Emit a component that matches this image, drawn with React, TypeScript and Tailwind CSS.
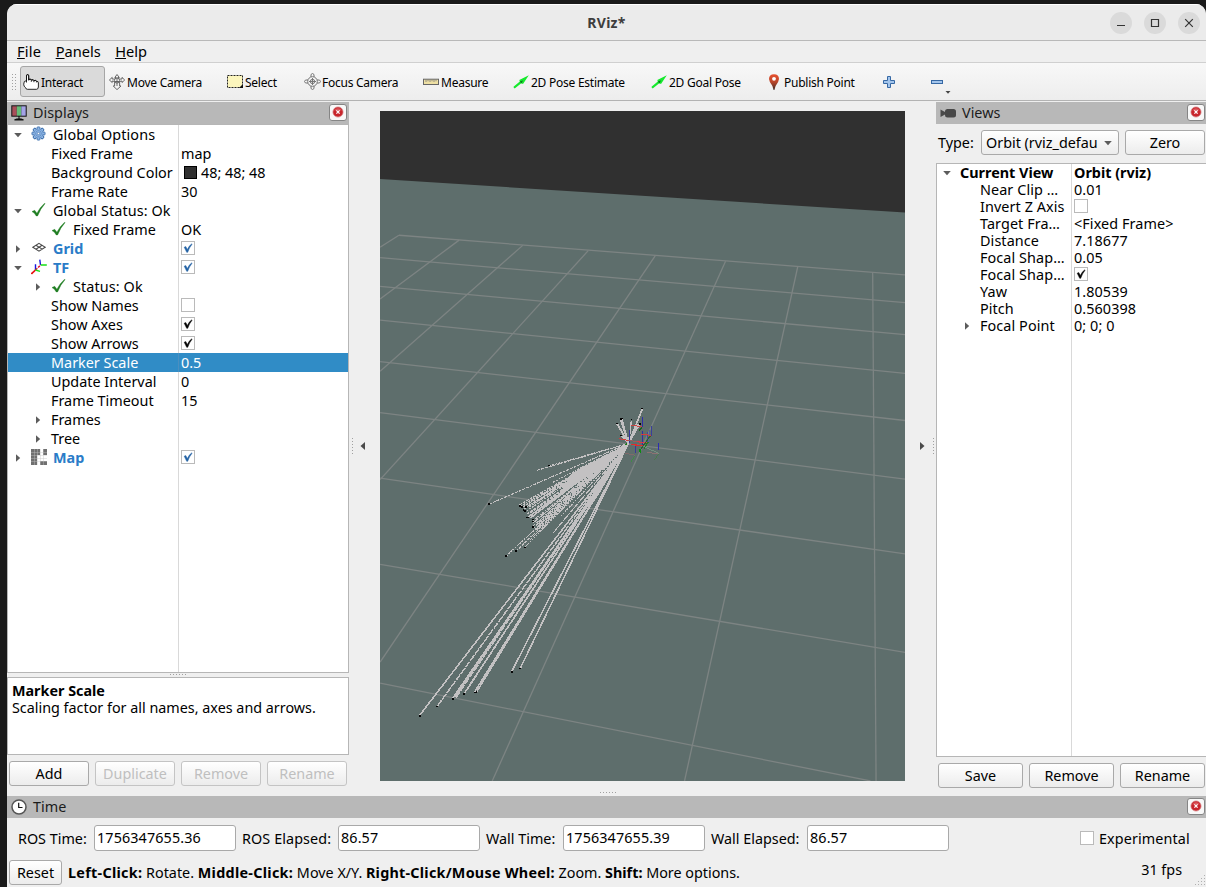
import React from "react";

const UI = "font-['Noto_Sans',sans-serif]";

function CloseBox() {
  return (
    <div className="flex h-[17px] w-[18px] shrink-0 items-center justify-center rounded-[3px] border border-[#858585] bg-[#f8f8f8]">
      <svg width="12" height="12" viewBox="0 0 12 12">
        <circle cx="6" cy="6" r="5.1" fill="#c8252c" stroke="#d98a8c" strokeWidth="0.7" />
        <path d="M2.2 4.5a4.3 4.3 0 0 1 7.6 0Z" fill="#dd5a5e" />
        <path d="M4.4 4.4l3.2 3.2M7.6 4.4l-3.2 3.2" stroke="#fff" strokeWidth="1.3" />
      </svg>
    </div>
  );
}

function DockTitle({ icon, title, closePad }: { icon: React.ReactNode; title: string; closePad: string }) {
  return (
    <div className={`flex h-[22px] shrink-0 items-center bg-[#b8b8b8] pl-1 ${closePad}`}>
      <div className="flex w-[22px] items-center">{icon}</div>
      <div className="grow text-[14.4px] leading-[22px] text-[#1c1c1c]">{title}</div>
      <div className="-mt-[2px]"><CloseBox /></div>
    </div>
  );
}

function Button({ children, className = "", disabled = false }: { children: React.ReactNode; className?: string; disabled?: boolean }) {
  return (
    <div
      className={`flex h-[25px] items-center justify-center rounded-[3px] border bg-linear-to-b from-white to-[#ececec] text-[14.35px] leading-[22px] ${
        disabled ? "border-[#c4c4c4] text-[#bfbfbf]" : "border-[#a9a9a9] text-black"
      } ${className}`}
    >
      {children}
    </div>
  );
}

function Arrow({ open = false }: { open?: boolean }) {
  return (
    <svg width="8" height="8" viewBox="0 0 8 8" className="block">
      <path d={open ? "M0.2 2h7.6L4 6.2Z" : "M2 0.2v7.6L6.2 4Z"} fill="#5c5c5c" />
    </svg>
  );
}

function Check({ on = true, blue = false }: { on?: boolean; blue?: boolean }) {
  return (
    <div className="h-[14px] w-[14px] border border-[#bababa] bg-white">
      {on && (
        <svg width="12" height="12" viewBox="0 0 12 12" className="block">
          <path d="M2.2 5.2L3.8 4.6L5.3 7.6Q7 3.6 9.8 1.8L9.9 2.6Q7.4 5.4 5.7 10.3H4.7Z" fill={blue ? "#2463a5" : "#050505"} stroke={blue ? "#2463a5" : "#050505"} strokeWidth="0.5" />
        </svg>
      )}
    </div>
  );
}

const gearTeeth = [0, 45, 90, 135, 180, 225, 270, 315];

const icons: Record<string, React.ReactNode> = {
  gear: (
    <svg width="16" height="16" viewBox="0 0 16 16" className="-mt-[2px] block">
      {gearTeeth.map((a) => (
        <rect key={a} x="6.1" y="1" width="2.8" height="4" rx="0.6" fill="#a9c8ee" stroke="#3a6fae" strokeWidth="1" transform={`rotate(${a} 7.5 7.5)`} />
      ))}
      <circle cx="7.5" cy="7.5" r="4.5" fill="#93b9e6" stroke="#5b8bc6" strokeWidth="0.6" />
      <circle cx="7.5" cy="7.5" r="2.9" fill="none" stroke="#4677b4" strokeWidth="0.6" />
      <circle cx="7.5" cy="7.5" r="1.2" fill="#fff" stroke="#3a6fae" strokeWidth="0.7" />
    </svg>
  ),
  ok: (
    <svg width="16" height="16" viewBox="0 0 16 16" className="-mt-[2px] block">
      <path d="M1 9.6L3.7 8.3L5.9 11.2Q8.5 5.8 13.6 1.2L14 1.7Q9.4 6.6 6.6 13.9H5.2Q3.7 10.9 1 9.6Z" fill="#1f7d22" stroke="#1f7d22" strokeWidth="0.4" />
    </svg>
  ),
  grid: (
    <svg width="16" height="16" viewBox="0 0 16 16" fill="none" stroke="#4a4a4a" strokeWidth="1.1" className="-mt-px block">
      <path d="M8 3.4L14.2 7.2L8 11.2L1.8 7.2ZM4.9 5.2L11.2 9.1M11.1 5.2L4.9 9.2" />
    </svg>
  ),
  tf: (
    <svg width="16" height="16" viewBox="0 0 16 16" fill="none" strokeWidth="1.4" className="-mt-[2px] block">
      <path d="M4.5 11V5.2M9.5 6L8.8 0.7" stroke="#1616e0" />
      <path d="M4.5 11L9.8 6" stroke="#e8102a" strokeDasharray="2.5 1" />
      <path d="M4.5 11L0.4 14.8" stroke="#e81010" strokeWidth="1.7" />
      <path d="M4.5 11L9 12.3M9.7 6H15.8" stroke="#17e017" />
    </svg>
  ),
  map: (
    <svg width="16" height="16" viewBox="0 0 16 16" className="-mt-[2px] block">
      <path d="M0 0H9V6H6V16H0ZM12 0H16V6H12ZM9 12H16V16H9Z" fill="#707070" />
      <path d="M0 3.5H16M0 6.5H16M0 9.5H16M0 12.5H16M3.5 0V16M6.5 0V16M9.5 0V16M12.5 0V16" stroke="#c4c4c4" strokeWidth="0.4" />
    </svg>
  ),
};

type Item = {
  name: string;
  depth: 0 | 1;
  arrow?: "open" | "closed";
  icon?: string;
  value?: React.ReactNode;
  blue?: boolean;
  selected?: boolean;
};

const displayRows: Item[] = [
  { name: "Global Options", depth: 0, arrow: "open", icon: "gear" },
  { name: "Fixed Frame", depth: 1, value: "map" },
  {
    name: "Background Color",
    depth: 1,
    value: (
      <span className="flex items-center">
        <span className="mr-1 ml-[3px] h-[13px] w-[13px] border border-black bg-[#303030]" />
        48; 48; 48
      </span>
    ),
  },
  { name: "Frame Rate", depth: 1, value: "30" },
  { name: "Global Status: Ok", depth: 0, arrow: "open", icon: "ok" },
  { name: "Fixed Frame", depth: 1, icon: "ok", value: "OK" },
  { name: "Grid", depth: 0, arrow: "closed", icon: "grid", blue: true, value: <Check blue /> },
  { name: "TF", depth: 0, arrow: "open", icon: "tf", blue: true, value: <Check blue /> },
  { name: "Status: Ok", depth: 1, arrow: "closed", icon: "ok" },
  { name: "Show Names", depth: 1, value: <Check on={false} /> },
  { name: "Show Axes", depth: 1, value: <Check /> },
  { name: "Show Arrows", depth: 1, value: <Check /> },
  { name: "Marker Scale", depth: 1, value: "0.5", selected: true },
  { name: "Update Interval", depth: 1, value: "0" },
  { name: "Frame Timeout", depth: 1, value: "15" },
  { name: "Frames", depth: 1, arrow: "closed" },
  { name: "Tree", depth: 1, arrow: "closed" },
  { name: "Map", depth: 0, arrow: "closed", icon: "map", blue: true, value: <Check blue /> },
];

function Value({ children }: { children?: React.ReactNode }) {
  const isText = typeof children === "string";
  return <div className={`flex items-center pl-[2px] ${isText ? "" : "pb-px"}`}>{children}</div>;
}

function DisplayRow({ row }: { row: Item }) {
  const line = row.selected ? "border-[#4a8fc0]" : "border-[#d9d9d9]";
  return (
    <div className={`flex h-[19px] shrink-0 text-[14.4px] leading-[19px] ${row.selected ? "bg-[#308cc6] text-white" : "text-black"}`}>
      <div className={`flex w-[171px] items-center overflow-hidden border-r whitespace-nowrap ${line} ${row.depth === 0 ? "pl-[6px]" : "pl-[26px]"}`}>
        <div className="w-[17px] shrink-0">{row.arrow && <Arrow open={row.arrow === "open"} />}</div>
        {row.icon && <div className="w-[22px] shrink-0">{icons[row.icon]}</div>}
        <span className={row.blue ? "font-bold text-[#2a7cc8]" : row.icon ? "tracking-[0.1px]" : ""}>{row.name}</span>
      </div>
      <Value>{row.value}</Value>
    </div>
  );
}

function HandleDots({ vertical = false }: { vertical?: boolean }) {
  const n = [0, 1, 2, 3, 4, 5];
  return (
    <div className={`flex gap-[2px] ${vertical ? "flex-col" : ""}`}>
      {n.map((i) => (
        <span key={i} className="h-px w-px bg-[#a0a0a0]" />
      ))}
    </div>
  );
}

function DisplaysPanel() {
  return (
    <div className="flex w-[342px] shrink-0 flex-col">
      <DockTitle
        title="Displays"
        closePad="pr-[2px]"
        icon={
          <svg width="16" height="16" viewBox="0 0 16 16">
            <rect x="0.3" y="0.3" width="15.4" height="11.4" fill="#111" />
            <rect x="1.3" y="1.3" width="4.5" height="9.4" fill="#a84f5a" />
            <rect x="5.8" y="1.3" width="4.5" height="9.4" fill="#65bc78" />
            <rect x="10.3" y="1.3" width="4.4" height="9.4" fill="#a3a3e6" />
            <path d="M8 11V13.8M3.5 15Q8 12.6 12.5 15Z" fill="#111" stroke="#111" strokeWidth="1.1" />
          </svg>
        }
      />
      <div className="flex h-[549px] flex-col border border-[#b6b6b6] bg-white">
        {displayRows.map((row, i) => (
          <DisplayRow key={i} row={row} />
        ))}
        <div className="w-[171px] grow border-r border-[#d9d9d9]" />
      </div>
      <div className="flex h-1 items-start justify-center pt-px"><HandleDots /></div>
      <div className="h-[78px] border border-[#b6b6b6] bg-white px-1 pt-1 text-[14.35px] leading-[17px] whitespace-nowrap text-black">
        <div className="font-bold">Marker Scale</div>
        <div>Scaling factor for all names, axes and arrows.</div>
      </div>
      <div className="flex gap-[6px] pt-[6px] pl-[2px]">
        <Button className="w-20">Add</Button>
        <Button className="w-20" disabled>Duplicate</Button>
        <Button className="w-20" disabled>Remove</Button>
        <Button className="w-20" disabled>Rename</Button>
      </div>
    </div>
  );
}

/* Scene geometry, in the coordinate space of the render view's viewBox. */
const gridLines = [
  [130, 296, 1475, 386], [80, 347, 1475, 449], [80, 412, 1475, 522], [80, 489, 1475, 610],
  [80, 583, 1475, 717], [80, 699, 1475, 850], [80, 848, 1475, 1020], [80, 1044, 1475, 1244],
  [80, 1314, 1383, 1536], [130, 296, 80, 323], [290, 307, 80, 441], [459, 319, 80, 605],
  [633, 331, 80, 851], [811, 343, 80, 1266], [998, 355, 378, 1536], [1190, 367, 889, 1536],
  [1389, 380, 1398, 1536],
];

const solidRays = [
  [185, 1387], [272, 1349], [277, 1346], [331, 1334], [337, 1333], [430, 1287], [452, 1281],
  [303, 1338], [473, 937], [476, 935], [480, 938], [777, 691], [774, 697], [709, 724], [722, 713],
  [720, 750], [768, 725], [772, 722], [712, 726], [719, 715], [748, 717], [764, 725],
];

const dashedRays = [
  [232, 1366], [282, 1346], [310, 1330],
  [498, 830], [530, 820], [370, 907], [540, 857], [450, 909], [453, 912], [458, 914], [462, 918],
  [468, 914], [470, 922], [475, 914], [486, 945], [486, 950], [490, 947], [487, 956], [489, 961],
  [494, 955], [500, 956], [495, 966], [415, 1025], [441, 1014], [466, 1004], [478, 989],
  [540, 972], [545, 967], [560, 935], [480, 927], [484, 930], [470, 930], [500, 900], [510, 885],
];

const tips = [
  [185, 1388], [232, 1367], [273, 1350], [303, 1337], [303, 1340], [331, 1335], [336, 1334],
  [430, 1288], [452, 1281], [370, 907], [529, 819], [451, 911], [458, 913], [461, 920], [467, 914],
  [474, 937], [471, 937], [487, 942], [486, 946], [486, 959], [466, 923], [415, 1025],
  [442, 1014], [466, 1005], [777, 690], [709, 724], [722, 712], [720, 714], [720, 751],
  [748, 715], [771, 725],
];

const axes: [number, number, number, number, string, number][] = [
  [742, 738, 742, 768, "#34349c", 1], [778, 709, 778, 732, "#2f2fa6", 1.2], [778, 740, 778, 778, "#2f2fa6", 1.2],
  [801, 729, 801, 753, "#3a3f9a", 1.2], [796, 738, 794, 766, "#55609a", 1], [790, 742, 790, 768, "#44499c", 1],
  [820, 769, 820, 784, "#2d2db4", 1.2], [758, 770, 758, 791, "#3a3a98", 1.2],
  [714, 758, 738, 762, "#d23b3b", 1], [748, 728, 776, 731, "#c84444", 1], [772, 748, 799, 751, "#d83a3a", 1],
  [738, 762, 790, 768, "#9a5d5d", 1], [762, 765, 788, 768, "#d83a48", 1.2], [748, 771, 778, 775, "#e02a2a", 1.3],
  [732, 791, 757, 796, "#806a6a", 1], [790, 789, 820, 793, "#8d7272", 1],
  [798, 752, 768, 788, "#2c6630", 1.2], [792, 766, 781, 781, "#257a26", 1.3], [775, 733, 768, 741, "#1c6222", 1.4],
  [757, 797, 747, 811, "#418c46", 1], [820, 793, 810, 806, "#4a7a4c", 1], [780, 775, 820, 792, "#73917f", 1],
  [770, 782, 772, 791, "#0d8c12", 1.6], [736, 768, 732, 772, "#1a7a1a", 1.4],
];

function Scene() {
  return (
    <svg width="525" height="670" viewBox="79.7 13.6 1395.2 1522.6" preserveAspectRatio="none" className="block bg-[#5e6e6c]">
      <path d="M79 13H1476V244.5L79 168Z" fill="#303030" />
      {gridLines.map(([a, b, c, d], i) => (
        <line key={i} x1={a} y1={b} x2={c} y2={d} stroke="#7d8483" strokeWidth="1.3" vectorEffect="non-scaling-stroke" />
      ))}
      <g stroke="#c3c1c2" shapeRendering="crispEdges">
        {solidRays.map(([x, y], i) => (
          <line key={i} x1="740" y1="769" x2={x} y2={y} strokeWidth="1.55" vectorEffect="non-scaling-stroke" />
        ))}
        {dashedRays.map(([x, y], i) => (
          <line key={i} x1={x} y1={y} x2="740" y2="769" strokeWidth={i < 3 ? 1.45 : 1.1} strokeDasharray={i < 3 ? "7 1" : i % 2 ? "3 1" : "2 1"} vectorEffect="non-scaling-stroke" />
        ))}
        <path d="M740 769L590 836L560 880L610 857L680 813ZM740 769L652 864L628 928L662 884Z" fill="#c3c1c2" stroke="none" />
      </g>
      <g shapeRendering="crispEdges">
        {axes.map(([a, b, c, d, color, w], i) => (
          <line key={i} x1={a} y1={b} x2={c} y2={d} stroke={color} strokeWidth={w} vectorEffect="non-scaling-stroke" />
        ))}
        {tips.map(([x, y], i) => (
          <rect key={i} x={x - 2.5} y={y - 1.7} width="5" height="3.4" fill="#050505" />
        ))}
      </g>
    </svg>
  );
}

function Center() {
  return (
    <div className="flex w-[587px] shrink-0 flex-col items-center">
      <div className="flex h-[679px] w-full items-center pt-[9px]">
        <div className="flex w-[31px] items-center gap-[7px] pl-[3px]">
          <HandleDots vertical />
          <svg width="6" height="8" viewBox="0 0 6 8"><path d="M5 0V8L0.5 4Z" fill="#4a4a4a" /></svg>
        </div>
        <Scene />
        <div className="flex w-[31px] items-center justify-end gap-[8px] pr-[2px]">
          <svg width="6" height="8" viewBox="0 0 6 8"><path d="M1 0V8L5.5 4Z" fill="#4a4a4a" /></svg>
          <HandleDots vertical />
        </div>
      </div>
      <div className="mt-[11px] ml-[-70px]"><HandleDots /></div>
    </div>
  );
}

const viewRows: { name: string; value: React.ReactNode; bold?: boolean; arrow?: "open" | "closed" }[] = [
  { name: "Current View", value: "Orbit (rviz)", bold: true, arrow: "open" },
  { name: "Near Clip …", value: "0.01" },
  { name: "Invert Z Axis", value: <Check on={false} /> },
  { name: "Target Fra…", value: "<Fixed Frame>" },
  { name: "Distance", value: "7.18677" },
  { name: "Focal Shap…", value: "0.05" },
  { name: "Focal Shap…", value: <Check /> },
  { name: "Yaw", value: "1.80539" },
  { name: "Pitch", value: "0.560398" },
  { name: "Focal Point", value: "0; 0; 0", arrow: "closed" },
];

function ViewsPanel() {
  return (
    <div className="flex w-[270px] shrink-0 flex-col">
      <DockTitle
        title="Views"
        closePad="pr-[1px]"
        icon={
          <svg width="16" height="16" viewBox="0 0 16 16">
            <path d="M0.5 4.5L5 7L5 9.5L0.5 12Z" fill="#4a4a4a" />
            <rect x="5" y="4" width="11" height="8.5" rx="2.5" fill="#484848" />
          </svg>
        }
      />
      <div className="flex h-[39px] items-center pb-[2px] pl-[2px] text-[14.35px]">
        <span className="w-[43px]">Type:</span>
        <div className="flex h-[25px] w-[138px] items-center rounded-[3px] border border-[#a9a9a9] bg-linear-to-b from-white to-[#ececec] pr-[6px] pl-1">
          <span className="whitespace-nowrap">Orbit (rviz_defau</span>
          <span className="grow" />
          <Arrow open />
        </div>
        <Button className="ml-[6px] w-20">Zero</Button>
      </div>
      <div className="flex h-[594px] flex-col border border-r-0 border-[#b6b6b6] bg-white">
        {viewRows.map((r, i) => (
          <div key={i} className={`flex h-[17px] shrink-0 text-[14.4px] leading-[17px] whitespace-nowrap ${r.bold ? "font-bold" : "tracking-[0.08px]"}`}>
            <div className={`flex w-[135px] items-center border-r border-[#d9d9d9] ${r.bold ? "pl-[6px]" : "pl-[26px]"}`}>
              <div className="w-[17px] shrink-0">{r.arrow && <Arrow open={r.arrow === "open"} />}</div>
              {r.name}
            </div>
            <Value>{r.value}</Value>
          </div>
        ))}
        <div className="w-[135px] grow border-r border-[#d9d9d9]" />
      </div>
      <div className="flex gap-[6px] pt-[6px] pl-[2px]">
        <Button className="w-[85px]">Save</Button>
        <Button className="w-[85px]">Remove</Button>
        <Button className="w-[85px]">Rename</Button>
      </div>
    </div>
  );
}

function Tool({ icon, label, className }: { icon: React.ReactNode; label: string; className: string }) {
  return (
    <div className={`flex h-[31px] shrink-0 items-center whitespace-nowrap ${className}`}>
      <div className="w-[18px] shrink-0">{icon}</div>
      <span className="pt-[2px]">{label}</span>
    </div>
  );
}

const poseArrow = (
  <svg width="16" height="16" viewBox="0 0 16 16">
    <path d="M1 14.2L0.5 12.7L6.8 7.6L6.3 6L15.8 1.2L10 10L8.3 9.3L2 14.2Z" fill="#16ea2e" />
    <path d="M6.8 7.6L8.4 9.4L10 6.6Z" fill="#0b7a1b" />
  </svg>
);

function Toolbar() {
  return (
    <div className="flex h-[38px] shrink-0 items-center border-b border-[#b3b3b3] bg-linear-to-b from-[#f8f8f8] to-[#ededed] pl-[5px] text-[12px] tracking-[-0.25px] text-black">
      <div className="flex w-2 gap-[2px]"><HandleDots vertical /><HandleDots vertical /></div>
      <Tool
        className="w-[85px] rounded-[3px] border border-[#a6a6a6] bg-[#dadada] pl-[2px]"
        label="Interact"
        icon={
          <svg width="16" height="16" viewBox="0 0 16 16">
            <path d="M3.5 8.5V1.8Q3.5 0.6 4.6 0.6T5.7 1.8V6.5M5.7 6V5.4Q8.2 4.6 8.3 6.2V7.8M8.3 6Q10.8 5.2 10.9 6.6V8.2M10.9 6.6Q13.3 5.8 13.4 7.2V8.4M13.4 7.3Q15.5 7 15.4 9V13Q15.2 15.3 13.5 15.3H4.4Q2.8 15.2 2.5 13.6Q0.7 12.4 0.7 10.2Q0.6 6.6 3.5 6.6V1.8Q3.5 0.6 4.6 0.6T5.7 1.8V5.4Q8.2 4.6 8.3 6Q10.8 5.2 10.9 6.6Q13.3 5.8 13.4 7.3" fill="#fff" stroke="#111" strokeWidth="0.9" />
          </svg>
        }
      />
      <Tool
        className="w-[118px] pl-1"
        label="Move Camera"
        icon={
          <svg width="16" height="16" viewBox="0 0 16 16" fill="#f4f4f4" stroke="#5a5a5a" strokeWidth="0.9">
            <path d="M8 0.5L10.3 3.5H9V5.2L13 5V3.4L15.7 6L13 8.5V7L10.6 7.5V12H12L8 15.6L4.2 12H5.6V7.5L3.2 7V8.5L0.4 6L3.2 3.4V5L7 5.2V3.5H5.8Z" />
            <circle cx="8" cy="6.5" r="2.6" /><path d="M5.5 7.5H10.5M8 4V12" />
          </svg>
        }
      />
      <Tool
        className="w-[77px] pl-1"
        label="Select"
        icon={
          <svg width="16" height="16" viewBox="0 0 16 16">
            <rect x="0.5" y="1.5" width="15" height="12" fill="#fcf6bd" stroke="#222" strokeDasharray="2 1" />
            <path d="M12 14H16V10Z" fill="#111" />
          </svg>
        }
      />
      <Tool
        className="w-[119px] pl-1"
        label="Focus Camera"
        icon={
          <svg width="17" height="17" viewBox="0 0 17 17" fill="none" stroke="#777" strokeWidth="1">
            <circle cx="8.5" cy="8.5" r="4.8" /><circle cx="8.5" cy="8.5" r="2.2" />
            <path d="M8.5 5V12M5 8.5H12" /><path d="M7 4V1.5L8.5 0.5L10 1.5V4M7 13V15.5L8.5 16.5L10 15.5V13M4 7H1.5L0.5 8.5L1.5 10H4M13 7H15.5L16.5 8.5L15.5 10H13" />
          </svg>
        }
      />
      <Tool
        className="w-[90px] pl-1"
        label="Measure"
        icon={
          <svg width="16" height="16" viewBox="0 0 16 16">
            <rect x="0.5" y="5.2" width="15" height="5.3" fill="#eee0a4" stroke="#666" />
            <path d="M3 5.5V8M5 5.5V7.3M7 5.5V8M9 5.5V7.3M11 5.5V8M13 5.5V7.3" stroke="#777" strokeWidth="0.8" />
          </svg>
        }
      />
      <Tool className="w-[138px] pl-1" label="2D Pose Estimate" icon={poseArrow} />
      <Tool className="w-[115px] pl-1" label="2D Goal Pose" icon={poseArrow} />
      <Tool
        className="w-[121px] pl-1"
        label="Publish Point"
        icon={
          <svg width="16" height="16" viewBox="0 0 16 16">
            <defs>
              <linearGradient id="pin" x1="0" y1="0" x2="0" y2="1"><stop offset="0" stopColor="#e8512f" /><stop offset="0.5" stopColor="#b8452a" /><stop offset="1" stopColor="#3c2a24" /></linearGradient>
            </defs>
            <path d="M8 0.2Q13 0.4 13 5Q12.8 8 9.6 12L8.4 16H7.6L6.4 12Q3.2 8 3 5Q3 0.4 8 0.2Z" fill="url(#pin)" />
            <circle cx="8" cy="4.8" r="1.9" fill="#fff" />
          </svg>
        }
      />
      <svg width="12" height="12" viewBox="0 0 12 12" className="shrink-0">
        <path d="M4.5 0.5H7.5V4.5H11.5V7.5H7.5V11.5H4.5V7.5H0.5V4.5H4.5Z" fill="#a3c5ec" stroke="#3668a4" />
      </svg>
      <svg width="24" height="20" viewBox="0 0 24 20" className="ml-[34px] mt-2 shrink-0">
        <rect x="2.5" y="4.5" width="11" height="3" fill="#a3c5ec" stroke="#3668a4" />
        <path d="M16.5 15H21.5L19 17.7Z" fill="#444" />
      </svg>
    </div>
  );
}

function Field({ label, value, labelClass }: { label: string; value: string; labelClass: string }) {
  return (
    <>
      <span className={`shrink-0 pt-[2px] whitespace-nowrap ${labelClass}`}>{label}</span>
      <div className="mr-[7px] flex h-[26px] w-[142px] shrink-0 items-center rounded-[3px] border border-[#a9a9a9] bg-white pl-[2px] tracking-[0.12px]">{value}</div>
    </>
  );
}

function TimePanel() {
  return (
    <div className="flex h-[91px] flex-col">
      <DockTitle
        title="Time"
        closePad="pr-[1px]"
        icon={
          <svg width="16" height="16" viewBox="0 0 16 16">
            <circle cx="8" cy="8" r="7" fill="#fff" stroke="#555" strokeWidth="1.5" />
            <path d="M7.7 3.8V8.5H11.5" fill="none" stroke="#111" strokeWidth="1.2" />
          </svg>
        }
      />
      <div className="flex h-10 shrink-0 items-center pl-[11px] text-[14.35px] text-black">
        <Field label="ROS Time:" value="1756347655.36" labelClass="w-[76px]" />
        <Field label="ROS Elapsed:" value="86.57" labelClass="-ml-px w-[96px] tracking-[0.1px]" />
        <Field label="Wall Time:" value="1756347655.39" labelClass="-ml-px w-[77px]" />
        <Field label="Wall Elapsed:" value="86.57" labelClass="-ml-px w-[96px]" />
        <div className="grow" />
        <Check on={false} />
        <span className="ml-[5px] w-[107px] pt-[2px] tracking-[0.12px]">Experimental</span>
      </div>
      <div className="flex h-[29px] shrink-0 items-center pl-[2px] text-[14.35px] text-black">
        <Button className="w-[53px] shrink-0">Reset</Button>
        <div className="ml-[6px] whitespace-nowrap">
          <b className="tracking-[0.3px]">Left-Click:</b> Rotate. <b className="tracking-[0.3px]">Middle-Click:</b> Move X/Y. <b className="tracking-[0.25px]">Right-Click/Mouse Wheel:</b> Zoom. <b>Shift:</b> More options.
        </div>
        <div className="grow" />
        <span className="mb-[5px]">31 fps</span>
        <svg width="12" height="12" viewBox="0 0 12 12" className="ml-3 self-end" fill="#b0b0b0">
          <path d="M10 0h1v1h-1zM7 3h1v1h-1zM10 3h1v1h-1zM4 6h1v1h-1zM7 6h1v1h-1zM10 6h1v1h-1zM1 9h1v1h-1zM4 9h1v1h-1zM7 9h1v1h-1zM10 9h1v1h-1z" />
        </svg>
      </div>
    </div>
  );
}

function WindowButton({ d }: { d: string }) {
  return (
    <div className="h-[22px] w-[22px] rounded-full bg-[#dadada]">
      <svg width="22" height="22" viewBox="0 0 22 22" fill="none" stroke="#333" strokeWidth="1.2"><path d={d} /></svg>
    </div>
  );
}

export default function App() {
  return (
    <div className={`h-[887px] w-[1206px] overflow-hidden bg-[#1a1a1a] pt-1 pl-[7px] ${UI}`}>
      <div className="flex h-[883px] w-[1199px] flex-col overflow-hidden rounded-t-[10px] bg-[#efefef]">
        <div className="grid h-[37px] shrink-0 grid-cols-3 items-center border-t border-b border-t-white border-b-[#b9b9b9] bg-[#ebebeb]">
          <span />
          <span className="text-center text-[14px] font-bold tracking-[0.3px] text-[#3d3d3d]">RViz*</span>
          <div className="flex justify-end gap-3 pr-[6px]">
            <WindowButton d="M7 13.5H15" />
            <WindowButton d="M7.5 7.5H14.5V14.5H7.5Z" />
            <WindowButton d="M7.2 7.2L14.8 14.8M14.8 7.2L7.2 14.8" />
          </div>
        </div>
        <div className="flex h-[22px] shrink-0 items-center gap-[14.5px] border-b border-[#d0d0d0] pl-[10px] text-[14.6px] text-black">
          <span className="tracking-[0.2px]"><u>F</u>ile</span>
          <span><u>P</u>anels</span>
          <span><u>H</u>elp</span>
        </div>
        <Toolbar />
        <div className="flex h-[695px] shrink-0 pt-[1px]">
          <DisplaysPanel />
          <Center />
          <ViewsPanel />
        </div>
        <TimePanel />
      </div>
    </div>
  );
}
